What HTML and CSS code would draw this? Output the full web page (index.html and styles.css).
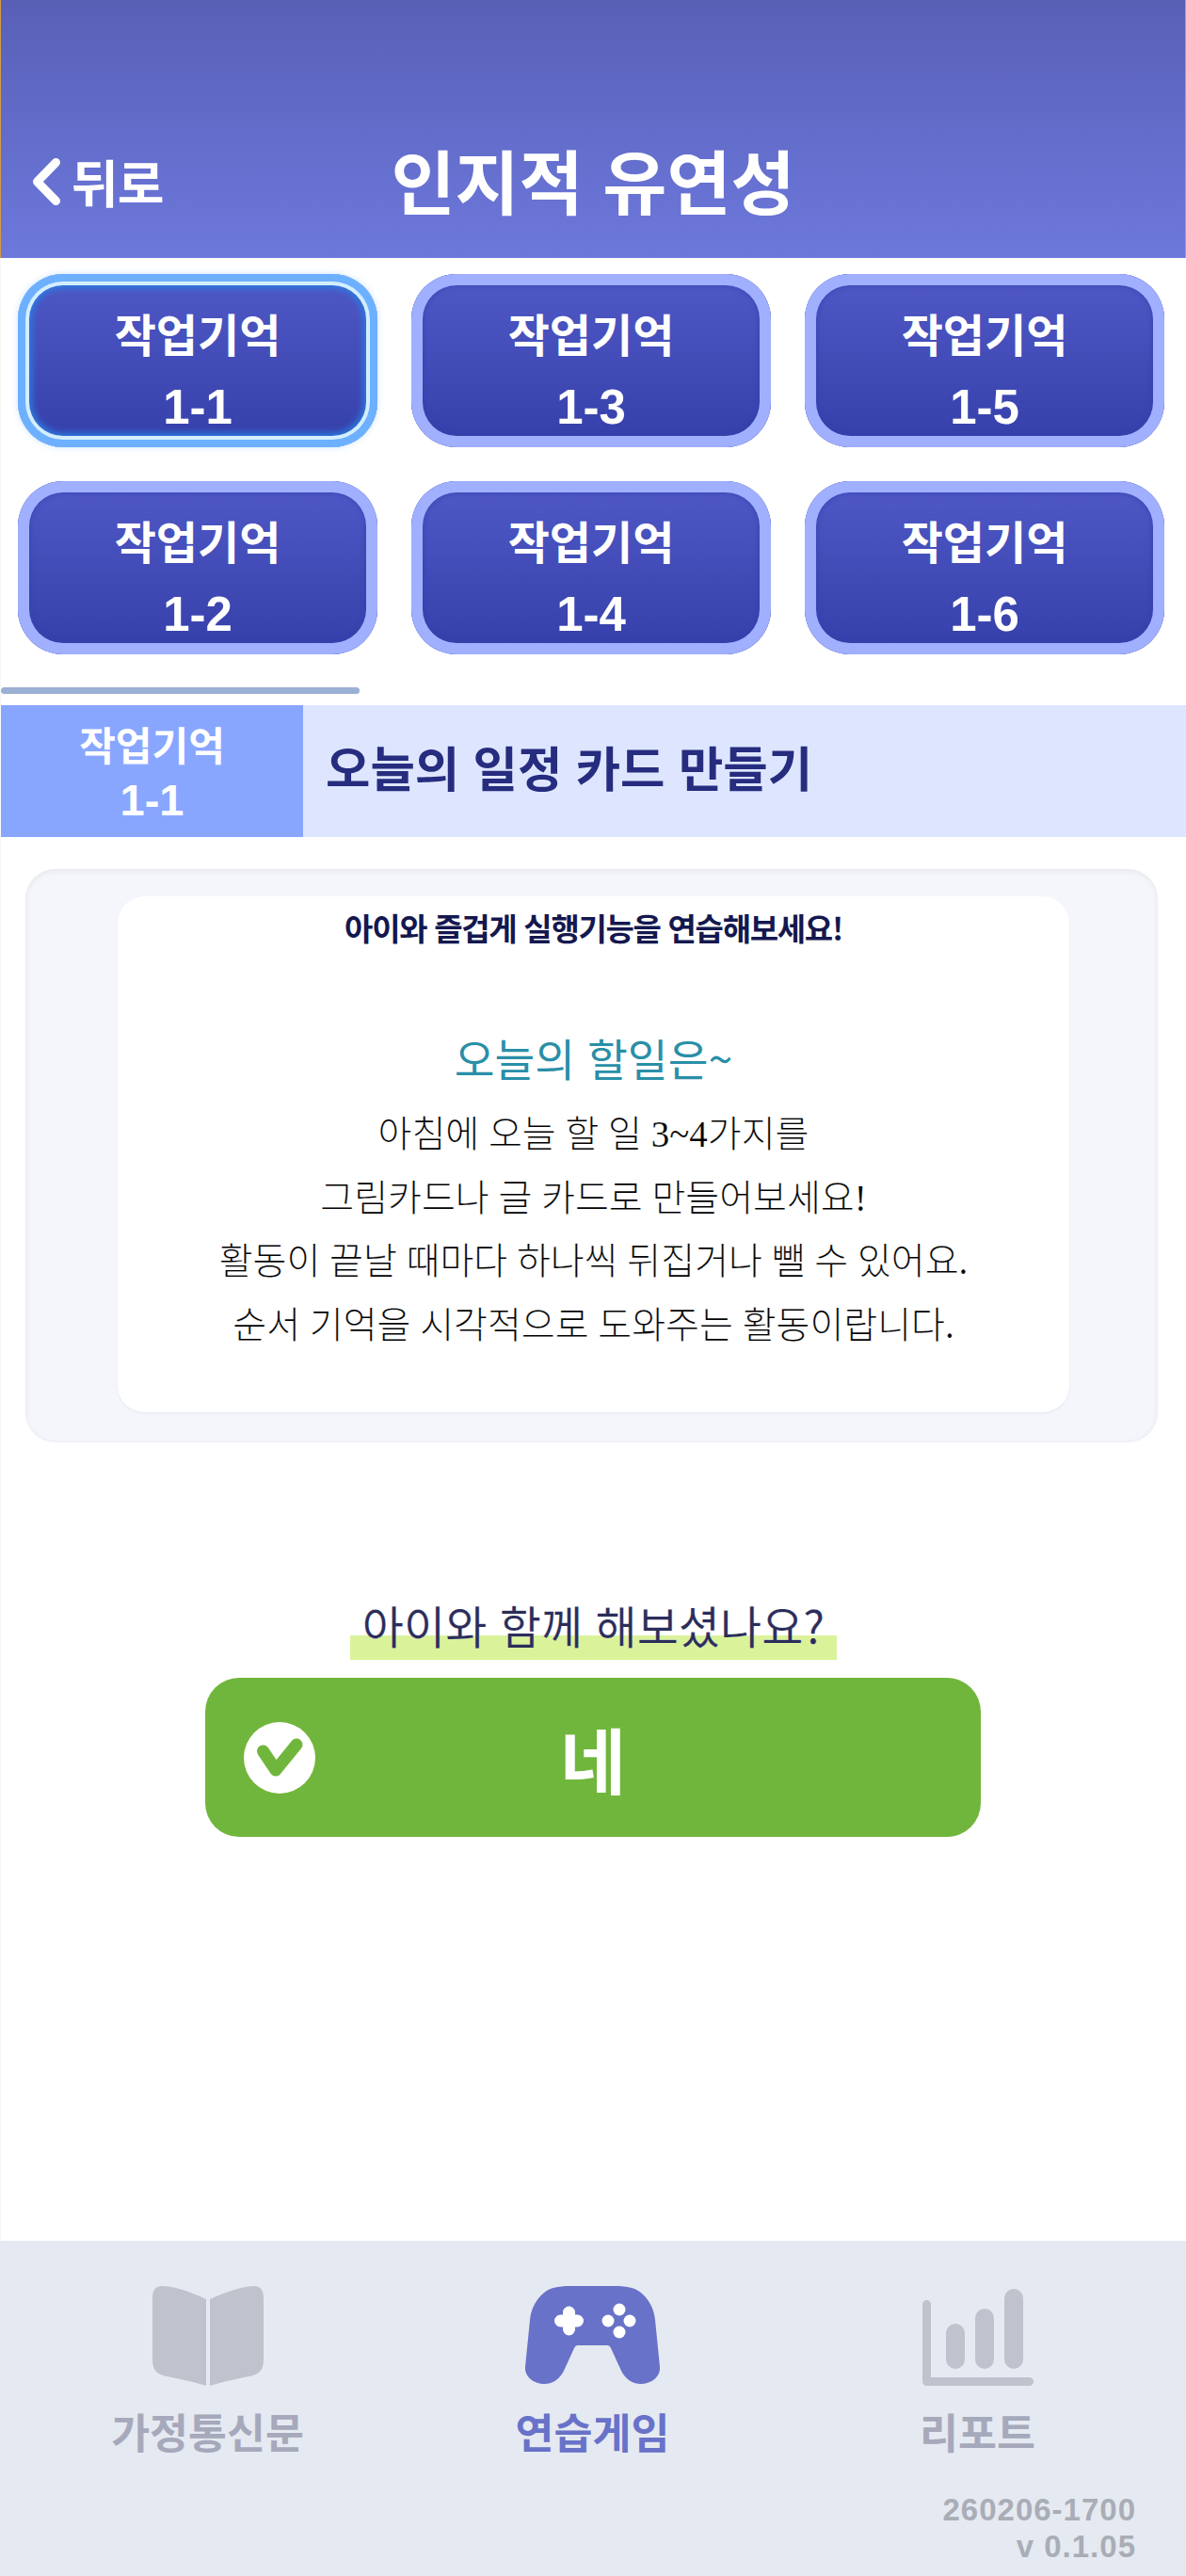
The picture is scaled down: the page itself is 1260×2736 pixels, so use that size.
FILE: index.html
```html
<!DOCTYPE html>
<html lang="ko">
<head>
<meta charset="utf-8">
<title>인지적 유연성</title>
<link rel="stylesheet" href="styles.css">
</head>
<body>
<div class="page">
  <header class="header">
    <a class="back">
      <svg class="chevron" viewBox="0 0 29 50"><polyline points="24.5,4.5 4.5,25 24.5,45.500"/></svg>
      <span>뒤로</span>
    </a>
    <h1 class="title">인지적 유연성</h1>
    <span></span>
  </header>
  <main class="main">
    <div class="tiles">
      <button class="tile selected"><span class="tile-name">작업기억</span><span class="tile-num">1-1</span></button>
      <button class="tile"><span class="tile-name">작업기억</span><span class="tile-num">1-3</span></button>
      <button class="tile"><span class="tile-name">작업기억</span><span class="tile-num">1-5</span></button>
      <button class="tile"><span class="tile-name">작업기억</span><span class="tile-num">1-2</span></button>
      <button class="tile"><span class="tile-name">작업기억</span><span class="tile-num">1-4</span></button>
      <button class="tile"><span class="tile-name">작업기억</span><span class="tile-num">1-6</span></button>
    </div>
    <div class="scrollbar"></div>
    <section class="section">
      <div class="section-tag"><span class="tag-name">작업기억</span><span class="tag-num">1-1</span></div>
      <h2 class="section-title">오늘의 일정 카드 만들기</h2>
    </section>
    <div class="card">
      <div class="card-inner">
        <p class="lead">아이와 즐겁게 실행기능을 연습해보세요!</p>
        <h3 class="todo">오늘의 할일은~</h3>
        <p class="desc">아침에 오늘 할 일 3~4가지를</p>
        <p class="desc">그림카드나 글 카드로 만들어보세요!</p>
        <p class="desc">활동이 끝날 때마다 하나씩 뒤집거나 뺄 수 있어요.</p>
        <p class="desc">순서 기억을 시각적으로 도와주는 활동이랍니다.</p>
      </div>
    </div>
    <div class="question"><span class="question-text">아이와 함께 해보셨나요?</span></div>
    <button class="yes">
      <svg class="yes-icon" viewBox="0 0 76 76"><circle cx="38" cy="38" r="38" class="yes-disc"/><polyline points="20.500,31 34,51 56,24" class="yes-check"/></svg>
      <span>네</span>
    </button>
  </main>
  <nav class="nav">
    <div class="nav-items">
      <a class="nav-item">
        <svg class="icon-book" viewBox="0 0 118 106"><path d="M57 14C40 6 22 0 10 0 3 0 0 5 0 13V78C0 90 5 94 16 96 30 99 45 102 57 106Z"/><path d="M61 14C78 6 96 0 108 0 115 0 118 5 118 13V78C118 90 113 94 102 96 88 99 73 102 61 106Z"/></svg>
        <span>가정통신문</span>
      </a>
      <a class="nav-item active">
        <svg class="icon-pad" viewBox="0 0 143 104">
          <path d="M48 0H95C108 0 118 2 124 8 133 16 137 26 138 36L143 86C144 96 134 104 123 104 113 104 106 98 102 90L91 66C90 64 89 63 87 63H56C54 63 53 64 52 66L41 90C37 98 30 104 20 104 9 104-1 96 0 86L5 36C6 26 10 16 19 8 25 2 35 0 48 0Z"/>
          <path class="pad-cross" d="M37.500 37H55.500M46.500 28V46"/>
          <circle class="pad-dot" cx="100" cy="25" r="6.500"/><circle class="pad-dot" cx="88" cy="37" r="6.500"/><circle class="pad-dot" cx="111" cy="37" r="6.500"/><circle class="pad-dot" cx="100" cy="49" r="6.500"/>
        </svg>
        <span>연습게임</span>
      </a>
      <a class="nav-item">
        <svg class="icon-chart" viewBox="0 0 118 106">
          <path d="M4.500 19.500V101.500H113.500" class="chart-axis"/>
          <rect x="25" y="40" width="20" height="48" rx="10"/><rect x="56" y="24" width="20" height="64" rx="10"/><rect x="87" y="3" width="20" height="85" rx="10"/>
        </svg>
        <span>리포트</span>
      </a>
    </div>
    <div class="version"><div>260206-1700</div><div>v 0.1.05</div></div>
  </nav>
</div>
</body>
</html>
```

FILE: styles.css
```css
* { box-sizing: border-box; }
html, body { margin: 0; padding: 0; background: #fff; }
body { font-family: "Noto Sans CJK KR", "Noto Sans", sans-serif; }
h1, h2, h3, p { margin: 0; }
button { font-family: inherit; border: 0; padding: 0; }

.page { width: 1260px; height: 2736px; display: flex; flex-direction: column; overflow: hidden; }

.header {
  height: 274px; flex: none;
  background: linear-gradient(180deg, #5860b6 0%, #6d78dc 100%);
  border-left: 1px solid #d59a45; border-right: 1px solid #d59a45;
  display: grid; grid-template-columns: 1fr auto 1fr; align-items: center;
  padding: 148px 0 42px 0; color: #fff;
}
.back { display: flex; align-items: center; gap: 12px; margin: 6px 0 0 34px; font-size: 54px; font-weight: 700; line-height: 60px; letter-spacing: -1px; }
.chevron { width: 29px; height: 50px; fill: none; stroke: #fff; stroke-width: 9; stroke-linecap: round; stroke-linejoin: round; }
.title { font-size: 74px; font-weight: 700; line-height: 84px; }

.main { flex: 1; display: flex; flex-direction: column; border-left: 1px solid #f8f8f8; }

.tiles { display: grid; grid-template-columns: repeat(3, 382px); gap: 36px; padding: 17px 0 0 18px; }
.tile {
  height: 184px; border-radius: 48px; color: #fff; padding-top: 19px;
  display: flex; flex-direction: column; align-items: center; justify-content: center; gap: 6px;
  background: linear-gradient(180deg, #5059c6 0%, #353fa9 100%);
  box-shadow: inset 0 0 0 12px #a0b0ff, inset 0 0 5px 13px rgba(52, 62, 170, .6);
}
.tile.selected {
  box-shadow: 0 0 7px rgba(108, 176, 255, .35), inset 0 0 0 8px #6cb0ff, inset 0 0 0 12px #d4eeff, inset 0 0 7px 15px #2b7ce0;
}
.tile-name { font-size: 48px; font-weight: 700; line-height: 74px; }
.tile-num { font-family: "Liberation Sans", sans-serif; font-size: 51px; font-weight: 700; line-height: 74px; }

.scrollbar { width: 381px; height: 7px; margin-top: 35px; background: #9ab0d4; border-radius: 4px; }

.section { display: flex; margin-top: 12px; height: 140px; background: #dee6ff; }
.section-tag { width: 321px; background: #89a6ff; color: #fff; display: flex; flex-direction: column; align-items: center; justify-content: center; padding-top: 1px; }
.tag-name { font-size: 42px; font-weight: 700; line-height: 57px; }
.tag-num { font-family: "Liberation Sans", sans-serif; font-size: 47px; font-weight: 700; line-height: 57px; margin-top: 3px; }
.section-title { font-size: 51.500px; font-weight: 700; color: #262d7f; align-self: center; margin: 0 0 10px 24px; line-height: 64px; }

.card {
  margin: 34px 30px 0 26px; padding: 29px 94px 32px 98px;
  background: #f4f6fb; border-radius: 32px;
  box-shadow: inset 0 3px 5px #eaecef, inset 0 0 4px #e8eaef;
}
.card-inner {
  height: 548px; background: #fff; border-radius: 28px; text-align: center;
  box-shadow: 0 1px 2px #e3e6f3; padding-top: 8px;
}
.lead { font-size: 33px; font-weight: 700; color: #14184f; line-height: 50px; letter-spacing: -1.300px; }
.todo { font-size: 46.500px; font-weight: 400; color: #2a8fa8; line-height: 60px; margin-top: 83px; margin-bottom: 18px; }
.desc { font-family: "Liberation Serif", "Noto Sans CJK KR", serif; font-size: 39px; font-weight: 300; color: #000; line-height: 67.500px; -webkit-text-stroke: 0.2px #fff; }

.question { margin-top: 158px; display: flex; justify-content: center; }
.question-text {
  font-size: 48px; line-height: 70px; color: #2b2d5a; padding: 0 13px 8px; -webkit-text-stroke: 0.2px #fff;
  background: linear-gradient(180deg, transparent 0 47px, #daf39a 47px 73px, transparent 73px);
}
.yes {
  margin: 14px 0 0 217px; width: 824px; height: 169px; border-radius: 36px;
  background: #71b63c; color: #fff; font-size: 76px; font-weight: 700;
  display: grid; grid-template-columns: 76px 1fr 76px; align-items: center; padding: 0 41px;
}
.yes-icon { width: 76px; height: 76px; }
.yes-disc { fill: #fff; }
.yes-check { fill: none; stroke: #71b63c; stroke-width: 13; stroke-linecap: round; stroke-linejoin: round; }

.nav { height: 356px; flex: none; background: #e5e9f1; padding: 48px 53px 0 0; }
.nav-items { display: grid; grid-template-columns: repeat(3, 409px); margin-left: 16px; margin-right: -53px; }
.nav-item { display: flex; flex-direction: column; align-items: center; color: #a6a9bb; font-size: 44.500px; font-weight: 700; line-height: 56px; gap: 20px; }
.nav-item svg { display: block; fill: #bfc3cd; }
.nav-item.active { color: #6872c8; }
.nav-item.active svg { fill: #6872c8; }
.nav-item .icon-book { width: 118px; height: 106px; }
.nav-item .icon-pad { width: 143px; height: 104px; margin-bottom: 2px; }
.nav-item .icon-chart { width: 118px; height: 106px; }
.pad-cross { fill: none; stroke: #fff; stroke-width: 13; stroke-linecap: round; }
.nav-item.active svg .pad-dot { fill: #fff; }
.chart-axis { fill: none; stroke: #bfc3cd; stroke-width: 9; stroke-linecap: round; stroke-linejoin: round; }
.version { margin-top: 36px; text-align: right; color: #a9adb6; font-family: "Liberation Sans", sans-serif; font-size: 33px; font-weight: 700; letter-spacing: 1px; line-height: 39px; }
```
